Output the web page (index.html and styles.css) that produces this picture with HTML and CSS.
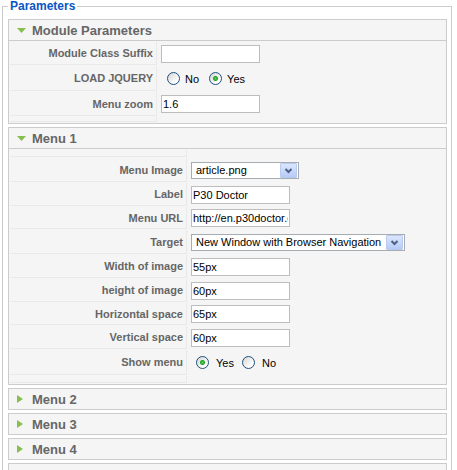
FILE: index.html
```html
<!DOCTYPE html>
<html lang="en">
<head>
  <meta charset="UTF-8">
  <title>Module Parameters</title>
  <link rel="stylesheet" href="styles.css">
</head>
<body>
  <fieldset class="adminform">
    <legend>Parameters</legend>

    <div class="pane-sliders">
      <!-- Module Parameters -->
      <div class="panel open">
        <h3 class="panel-title"><span class="toggler"><svg width="9" height="5" viewBox="0 0 9 5"><path d="M0 0H9L4.5 5Z" fill="#86bf4e"/></svg></span>Module Parameters</h3>
        <div class="panel-body">
          <div class="param-row h23">
            <div class="param-key">Module Class Suffix</div>
            <div class="param-value"><input class="text-input" type="text" value=""></div>
          </div>
          <div class="param-row h25">
            <div class="param-key">LOAD JQUERY</div>
            <div class="param-value radios jquery">
              <input class="radio" type="radio" name="jquery" id="jq0"><label for="jq0">No</label>
              <input class="radio" type="radio" name="jquery" id="jq1" checked><label for="jq1">Yes</label>
            </div>
          </div>
          <div class="param-row h24">
            <div class="param-key">Menu zoom</div>
            <div class="param-value"><input class="text-input" type="text" value="1.6"></div>
          </div>
          <div class="param-row h5">
            <div class="param-key"></div>
            <div class="param-value"></div>
          </div>
        </div>
      </div>

      <!-- Menu 1 -->
      <div class="panel open wide">
        <h3 class="panel-title"><span class="toggler"><svg width="9" height="5" viewBox="0 0 9 5"><path d="M0 0H9L4.5 5Z" fill="#86bf4e"/></svg></span>Menu 1</h3>
        <div class="panel-body">
          <div class="param-row h7">
            <div class="param-key"></div>
            <div class="param-value"></div>
          </div>
          <div class="param-row h24">
            <div class="param-key">Menu Image</div>
            <div class="param-value">
              <div class="select small">
                <span class="select-text">article.png</span>
                <span class="select-btn"><svg width="15" height="15" viewBox="0 0 15 15"><path d="M4.5 6L7.5 9L10.5 6" fill="none" stroke="#4d6185" stroke-width="2"/></svg></span>
              </div>
            </div>
          </div>
          <div class="param-row h23">
            <div class="param-key">Label</div>
            <div class="param-value"><input class="text-input" type="text" value="P30 Doctor"></div>
          </div>
          <div class="param-row h22">
            <div class="param-key">Menu URL</div>
            <div class="param-value"><input class="text-input" type="text" value="http://en.p30doctor.com"></div>
          </div>
          <div class="param-row h24">
            <div class="param-key">Target</div>
            <div class="param-value">
              <div class="select large">
                <span class="select-text">New Window with Browser Navigation</span>
                <span class="select-btn"><svg width="15" height="15" viewBox="0 0 15 15"><path d="M4.5 6L7.5 9L10.5 6" fill="none" stroke="#4d6185" stroke-width="2"/></svg></span>
              </div>
            </div>
          </div>
          <div class="param-row h23">
            <div class="param-key">Width of image</div>
            <div class="param-value"><input class="text-input" type="text" value="55px"></div>
          </div>
          <div class="param-row h23">
            <div class="param-key">height of image</div>
            <div class="param-value"><input class="text-input" type="text" value="60px"></div>
          </div>
          <div class="param-row h22">
            <div class="param-key">Horizontal space</div>
            <div class="param-value"><input class="text-input" type="text" value="65px"></div>
          </div>
          <div class="param-row h23">
            <div class="param-key">Vertical space</div>
            <div class="param-value"><input class="text-input" type="text" value="60px"></div>
          </div>
          <div class="param-row h25">
            <div class="param-key">Show menu</div>
            <div class="param-value radios showmenu">
              <input class="radio" type="radio" name="show" id="sm1" checked><label for="sm1">Yes</label>
              <input class="radio" type="radio" name="show" id="sm0"><label for="sm0">No</label>
            </div>
          </div>
          <div class="param-row h7">
            <div class="param-key"></div>
            <div class="param-value"></div>
          </div>
        </div>
      </div>

      <div class="panel">
        <h3 class="panel-title"><span class="toggler"><svg width="6" height="8" viewBox="0 0 6 8"><path d="M0 0V8L6 4Z" fill="#86bf4e"/></svg></span>Menu 2</h3>
      </div>
      <div class="panel">
        <h3 class="panel-title"><span class="toggler"><svg width="6" height="8" viewBox="0 0 6 8"><path d="M0 0V8L6 4Z" fill="#86bf4e"/></svg></span>Menu 3</h3>
      </div>
      <div class="panel">
        <h3 class="panel-title"><span class="toggler"><svg width="6" height="8" viewBox="0 0 6 8"><path d="M0 0V8L6 4Z" fill="#86bf4e"/></svg></span>Menu 4</h3>
      </div>
      <div class="panel">
        <h3 class="panel-title"><span class="toggler"><svg width="6" height="8" viewBox="0 0 6 8"><path d="M0 0V8L6 4Z" fill="#86bf4e"/></svg></span>Menu 5</h3>
      </div>
      <div class="panel">
        <h3 class="panel-title"><span class="toggler"><svg width="6" height="8" viewBox="0 0 6 8"><path d="M0 0V8L6 4Z" fill="#86bf4e"/></svg></span>Menu 6</h3>
      </div>
    </div>
  </fieldset>
</body>
</html>
```

FILE: styles.css
```css
html, body {
  margin: 0;
  padding: 0;
  background: #fff;
  font-family: "Liberation Sans", Arial, sans-serif;
  font-size: 11px;
  overflow: hidden;
}

.adminform {
  margin: 0 5px 0 2px;
  padding: 6px 4px 0 5px;
  border: 1px solid #ccc;
  min-width: 0;
}

.adminform legend {
  padding: 0 2px;
  color: #0b55c4;
  font-size: 12px;
  line-height: 13px;
  font-weight: bold;
}

/* sliders */
.panel {
  border: 1px solid #ccc;
  margin-bottom: 3px;
  background: #f5f5f5;
}

.panel-title {
  margin: 0;
  height: 20px;
  padding-left: 8px;
  display: flex;
  align-items: center;
  font-size: 13px;
  font-weight: bold;
  color: #666;
}

.panel.open .panel-title {
  border-bottom: 1px solid #ccc;
}

.toggler {
  width: 15px;
  display: flex;
  align-items: center;
}

.panel-body {
  padding: 0 1px 1px;
}

/* param rows */
.param-row {
  display: grid;
  grid-template-columns: 147px 1fr;
  column-gap: 1px;
  margin-top: 1px;
}

.wide .param-row {
  grid-template-columns: 177px 1fr;
}

.h5 { height: 5px; }
.h7 { height: 7px; }
.h22 { height: 22px; }
.h23 { height: 23px; }
.h24 { height: 24px; }
.h25 { height: 25px; }

.param-key {
  box-sizing: border-box;
  border-right: 1px solid #e9e9e9;
  border-bottom: 1px solid #e9e9e9;
  padding-right: 3px;
  display: flex;
  align-items: center;
  justify-content: flex-end;
  font-weight: bold;
  color: #666;
}

.param-value {
  display: flex;
  align-items: center;
  padding-left: 3px;
}

.text-input {
  box-sizing: border-box;
  width: 99px;
  height: 18px;
  margin: 0;
  padding: 0 1px;
  border: 1px solid #bdbdbd;
  background: #fff;
  color: #000;
  font-family: "Liberation Sans", Arial, sans-serif;
  font-size: 11px;
  outline: none;
}

/* combo boxes */
.select {
  box-sizing: border-box;
  height: 17px;
  border: 1px solid #a5acb2;
  background: #fff;
  display: flex;
  align-items: center;
  justify-content: space-between;
  padding: 0 1px 0 4px;
  color: #000;
}

.select.small { width: 108px; }
.select.large { width: 214px; }

.select-btn {
  width: 15px;
  height: 13px;
  border: 1px solid #b9c9ef;
  border-radius: 1px;
  background: linear-gradient(#dbe6fd, #b7cbf8);
  display: flex;
  align-items: center;
  justify-content: center;
  overflow: hidden;
}

/* radios */
.radios label {
  color: #000;
}

.radio {
  appearance: none;
  -webkit-appearance: none;
  box-sizing: border-box;
  width: 13px;
  height: 13px;
  margin: 0;
  border: 1px solid #1c5180;
  border-radius: 50%;
  background: linear-gradient(135deg, #d4d4cf, #fff 75%);
}

.radio:checked {
  background: radial-gradient(circle, #5fd35f 0, #21a121 2px, transparent 3px),
    linear-gradient(135deg, #d4d4cf, #fff 75%);
}

.jquery .radio:first-child { margin-left: 6px; }
.jquery label { margin-left: 5px; }
.jquery label + .radio { margin-left: 10px; }

.showmenu .radio:first-child { margin-left: 5px; }
.showmenu label { margin-left: 7px; }
.showmenu label + .radio { margin-left: 8px; }
```
